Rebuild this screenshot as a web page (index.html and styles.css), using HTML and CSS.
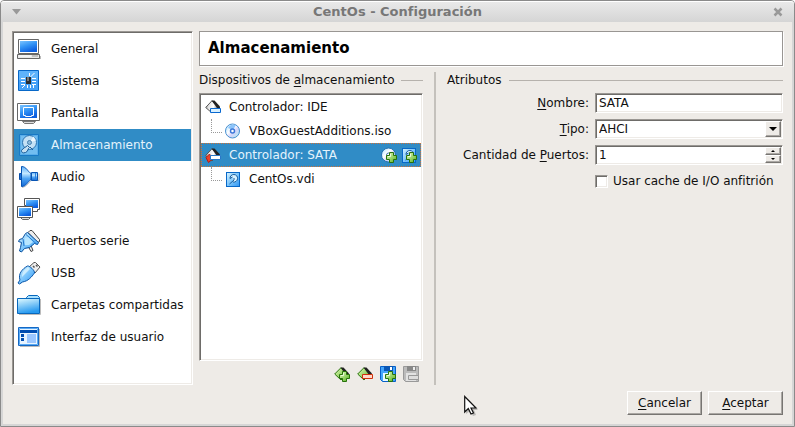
FILE: index.html
```html
<!DOCTYPE html>
<html lang="es">
<head>
<meta charset="utf-8">
<title>CentOs - Configuración</title>
<link rel="stylesheet" href="styles.css">
</head>
<body>
<svg class="defs" aria-hidden="true">
  <defs>
    <linearGradient id="blue" x1="0" y1="0" x2="0.5" y2="1"><stop offset="0" stop-color="#7cc4ff"/><stop offset="0.5" stop-color="#3394f5"/><stop offset="1" stop-color="#0c5fe0"/></linearGradient>
    <linearGradient id="sky" x1="0" y1="0" x2="1" y2="1"><stop offset="0" stop-color="#d8f4ff"/><stop offset="0.5" stop-color="#7cc6fc"/><stop offset="1" stop-color="#2d94f2"/></linearGradient>
    <linearGradient id="cone" x1="0" y1="0" x2="0" y2="1"><stop offset="0" stop-color="#5cb0fa"/><stop offset="0.35" stop-color="#c4e8ff"/><stop offset="0.6" stop-color="#4fa5f4"/><stop offset="1" stop-color="#1468d4"/></linearGradient>
    <linearGradient id="folder" x1="0" y1="0" x2="0.3" y2="1"><stop offset="0" stop-color="#e2fbff"/><stop offset="1" stop-color="#279af0"/></linearGradient>
    <linearGradient id="green" x1="0" y1="0" x2="1" y2="1"><stop offset="0" stop-color="#eaffc0"/><stop offset="1" stop-color="#4fae1c"/></linearGradient>
    <linearGradient id="disc" x1="0" y1="0" x2="1" y2="1"><stop offset="0" stop-color="#a4dcff"/><stop offset="0.4" stop-color="#ffffff"/><stop offset="0.6" stop-color="#d4d4fa"/><stop offset="1" stop-color="#a8f0ee"/></linearGradient>
    <linearGradient id="metal" x1="0" y1="0" x2="1" y2="0.2"><stop offset="0" stop-color="#777"/><stop offset="0.3" stop-color="#e0e0e0"/><stop offset="0.7" stop-color="#fff"/><stop offset="1" stop-color="#999"/></linearGradient>
    <g id="plus">
      <path d="M8.500 5.500h4v3h3v4h-3v3h-4v-3h-3v-4h3z" fill="url(#green)" stroke="#28720c"/>
      <path d="M9.500 7v2.500H7" fill="none" stroke="#fff" opacity=".7"/>
    </g>
    <g id="card">
      <path d="M.7 8.500 7 1.700l6 6.300-6 6z" fill="url(#metal)" stroke="#555"/>
      <path d="M6.500 1.500h3l5.500 6v2L12 9z" fill="#222"/>
    </g>
    <g id="greencard">
      <path d="M.7 8 7 1.700l6 6.300-6 6z" fill="url(#green)" stroke="#28720c"/>
      <path d="M6.500 1.500h3l5.500 6v2L12 9z" fill="#222"/>
    </g>
    <g id="drive">
      <rect x="1.500" y="1.500" width="13" height="14" fill="url(#sky)" stroke="#0868c8"/>
      <path d="M8 11a3.800 3.800 0 1 0-3-3.500l2.500-1.500" fill="#d9f2ff" stroke="#145a9c"/>
      <path d="m4.500 13 4.500-4V7" fill="none" stroke="#145a9c"/>
    </g>
  </defs>
</svg>
<div class="window">
  <header class="titlebar">
    <button class="title-button" aria-label="Menú de la ventana"><svg width="10" height="6" viewBox="0 0 10 6"><path d="M0 0h9L4.500 5.500z" fill="#999"/></svg></button>
    <h1 class="title">CentOs - Configuración</h1>
    <button class="title-button" aria-label="Cerrar"><svg width="10" height="10" viewBox="0 0 10 10"><path d="m1.500 1.500 7 7m0-7-7 7" stroke="#999" stroke-width="2.500"/></svg></button>
  </header>
  <div class="content">
    <nav class="sidebar sunken">
      <a class="category" href="#general"><svg class="icon" viewBox="0 0 24 24"><path d="M3 19h21v3H2" fill="#bbb"/><path d="M1.500 2.500h20v14h-20z" fill="#fff" stroke="#666"/><path d="M3 4h17v11H3z" fill="url(#blue)"/><path d="M.5 17.500h22v4H.5z" fill="#e8e8e8" stroke="#666"/><path d="M2 19h12" stroke="#fff"/><path d="M15 19h6" stroke="#999"/></svg>General</a>
      <a class="category" href="#sistema"><svg class="icon" viewBox="0 0 24 24"><path d="M1.500 1.500h20v20h-20z" fill="#5fb4fb" stroke="#0868c8"/><path d="M2 11h19v10H2z" fill="#3293f5" opacity=".6"/><path d="M4 9.500h4m-4 3h4m-4 3h4m7-6h4m-4 3h4m-4 3h4M12.500 4v3m5-3-4 4M10.500 16v3m3-3v3m3-3v3M5 19l3-3" fill="none" stroke="#fff"/><path d="M9 8h5v7H9z" fill="#2a2d31"/><path d="M10 8h2v4h-2z" fill="#777"/></svg>Sistema</a>
      <a class="category" href="#pantalla"><svg class="icon" viewBox="0 0 24 24"><path d="M5.500 20.500h13l-2 2h-9z" fill="#ddd" stroke="#777"/><path d="M.5 2.500h22v17H.5z" fill="#fff" stroke="#666"/><path d="M3 4h17v13H3z" fill="url(#blue)"/><path d="M6.500 6.500h10v8h-2v1h-6v-1h-2z" fill="none" stroke="#fff"/></svg>Pantalla</a>
      <a class="category selected" href="#almacenamiento" aria-current="page"><svg class="icon" viewBox="0 0 24 24"><path d="M2.500 1.500h19v21h-19z" fill="#5aaeea" stroke="#1879c4"/><path d="M4 3h16v18H4z" fill="#72bdf0"/><circle cx="12.500" cy="9.500" r="7" fill="#c4e1f5" stroke="#2a73b0"/><path d="m12.500 9.500 4-6 2.500 4z" fill="#eef8ff"/><circle cx="12.500" cy="9.500" r="2" fill="#8cbadb" stroke="#4480ae"/><path d="M4.500 17.500c2-3 4-3 6-5l2 2c-2 1-1 4-4 5s-4 0-4-2z" fill="#c5dff1" stroke="#155a98"/><path d="m13 14 3 3" stroke="#1b5f9c"/></svg>Almacenamiento</a>
      <a class="category" href="#audio"><svg class="icon" viewBox="0 0 24 24"><path d="M5 22.500c5-1 7-5 9-7h8v-7" fill="none" stroke="#bbb"/><path d="M4.500 8.500h-2v6h2z" fill="#1c72dc" stroke="#074fab"/><path d="M4.500 1.500c5 0 6 5 9.500 7v6c-3.500 2-4.500 7-9.500 7z" fill="url(#cone)" stroke="#0754b4"/><path d="M14.500 7.500h6v8h-6z" fill="url(#cone)" stroke="#0754b4"/><path d="M18.500 8v7" stroke="#2a80e0"/></svg>Audio</a>
      <a class="category" href="#red"><svg class="icon" viewBox="0 0 24 24"><path d="M7.500 1.500h15v11h-2v2h-8v-6h-5z" fill="#fff" stroke="#555"/><path d="M9 3h12v8H9z" fill="url(#blue)"/><path d="M3.500 20.500h10l-2 2h-6z" fill="#ddd" stroke="#666"/><path d="M.5 9.500h15v11H.5z" fill="#fff" stroke="#555"/><path d="M2 11h12v8H2z" fill="url(#blue)"/></svg>Red</a>
      <a class="category" href="#serie"><svg class="icon" viewBox="0 0 24 24"><path d="m11 3.500 2-2h2l7.500 9v2l-2 1z" fill="#eee" stroke="#444"/><path d="m11 17 3 5.500 2-1-2-5z" fill="#eee" stroke="#444"/><path d="m1.500 12.500 1-2 3-1 3-5 2-1 11 10-1 2-3-1-5 4-5 1-3 3.500-2-1 1-3.500 1-5z" fill="url(#sky)" stroke="#074f9e"/><path d="m9 5.500 10 9M6 10l1 7" stroke="#2378cc"/><path d="m8 9 3-1 5 5-4 3H8z" fill="#b8e6ff"/></svg>Puertos serie</a>
      <a class="category" href="#usb"><svg class="icon" viewBox="0 0 24 24"><path d="m12 6 5-4.500h1.500L23 6l-5 6z" fill="#eee" stroke="#555"/><path d="m16 5 1.500 1.500M19 4l1.500 1.500" stroke="#555" stroke-width="1.500"/><path d="M3 19C1 13 5 8 10.500 5c2-.5 7.500 4.500 7 7-3 4-6 8-12 9l-3 2-1.500-1z" fill="url(#sky)" stroke="#0754a8"/><path d="M5 16c0-5 2-7 6-10l2 2z" fill="#e4faff" opacity=".7"/></svg>USB</a>
      <a class="category" href="#carpetas"><svg class="icon" viewBox="0 0 24 24"><path d="M9.500 5.500v-1l2-2h9l2 2v4h-13" fill="#a8e1ff" stroke="#0868bd"/><path d="M.5 5.500h22v15H.5z" fill="url(#folder)" stroke="#0868bd"/><path d="M23.500 6v15.500H2" fill="none" stroke="#bbb"/></svg>Carpetas compartidas</a>
      <a class="category" href="#interfaz"><svg class="icon" viewBox="0 0 24 24"><path d="M22.500 4v17.500H3" fill="none" stroke="#bbb"/><path d="M1.500 2.500h20v18h-20z" fill="#e8f4ff" stroke="#1468c4"/><path d="M2.500 3.500h18v16h-18z" fill="none" stroke="#5aaaf4"/><path d="M3 5h17v3H3zm1 4h3v3H4zm0 4h3v3H4z" fill="#004cb0"/><path d="M10 9h9v9h-9z" fill="#9ac6ff"/></svg>Interfaz de usuario</a>
    </nav>
    <main class="page">
      <h2 class="page-title">Almacenamiento</h2>
      <div class="panels">
        <section class="storage">
          <h3 class="group-title"><span>Dispositivos de <u>a</u>lmacenamiento</span></h3>
          <div class="tree sunken">
            <div class="node"><svg class="small-icon" viewBox="0 0 16 16"><use href="#card"/><path d="M5.500 9.500h10v4h-10z" fill="#d8f0ff" stroke="#0868d0"/></svg><span>Controlador: IDE</span></div>
            <div class="node child"><svg class="small-icon" viewBox="0 0 16 16"><circle cx="7.500" cy="8" r="7" fill="url(#disc)" stroke="#4a90d0"/><path d="M3 5c2-4 6-4 8-3L8 7z" fill="#8cc4fa"/><circle cx="7.500" cy="8" r="2" fill="#fff" stroke="#3c78d8" stroke-width="1.500"/></svg><span>VBoxGuestAdditions.iso</span></div>
            <div class="node selected"><svg class="small-icon" viewBox="0 0 16 16"><use href="#card"/><path d="M1 10.500 4.500 7l3 5-4 3.500z" fill="#ee4028" stroke="#b61c10"/><path d="M5.500 8.500h10v4h-10z" fill="#fff" stroke="#2878c8"/></svg><span>Controlador: SATA</span>
              <button class="tool first" aria-label="Agregar dispositivo CD/DVD"><svg class="small-icon" viewBox="0 0 16 16"><circle cx="7.500" cy="8" r="7" fill="url(#disc)" stroke="#2470b0"/><circle cx="7.500" cy="8" r="2" fill="#fff" stroke="#4078b0"/><use href="#plus"/></svg></button>
              <button class="tool" aria-label="Agregar disco duro"><svg class="small-icon" viewBox="0 0 16 16"><use href="#drive"/><use href="#plus"/></svg></button>
            </div>
            <div class="node child"><svg class="small-icon" viewBox="0 0 16 16"><use href="#drive"/></svg><span>CentOs.vdi</span></div>
          </div>
          <div class="toolbar">
            <button class="tool" aria-label="Agregar controlador"><svg class="small-icon" viewBox="0 0 16 16"><use href="#greencard"/><use href="#plus"/></svg></button>
            <button class="tool" aria-label="Quitar controlador"><svg class="small-icon" viewBox="0 0 16 16"><use href="#greencard"/><path d="M5.500 8.500h10v4h-10z" fill="#ffd8c8" stroke="#d0300c"/></svg></button>
            <button class="tool" aria-label="Agregar conexión"><svg class="small-icon" viewBox="0 0 16 16"><path d="M.5.500h15v15h-13l-2-2z" fill="#45a5fb" stroke="#0860c8"/><path d="M4 0h9v5H4z" fill="#0b57b5"/><path d="M10 1h2v3h-2z" fill="#fff"/><path d="M3 7h10v8H3z" fill="#e9faff"/><use href="#plus"/></svg></button>
            <button class="tool" aria-label="Quitar conexión" disabled><svg class="small-icon" viewBox="0 0 16 16"><path d="M.5.500h15v15h-13l-2-2z" fill="#bbb" stroke="#999"/><path d="M4 0h9v5H4z" fill="#888"/><path d="M10 1h2v3h-2z" fill="#eee"/><path d="M3 7h10v8H3z" fill="#e2e2e2"/><path d="M5.500 9.500h10v4h-10z" fill="#ddd" stroke="#999"/></svg></button>
          </div>
        </section>
        <section class="attributes">
          <h3 class="group-title"><span>Atributos</span></h3>
          <form class="form">
            <label for="name"><u>N</u>ombre:</label>
            <input class="field sunken" id="name" type="text" value="SATA">
            <label for="type"><u>T</u>ipo:</label>
            <div class="control sunken">
              <select class="field" id="type"><option>AHCI</option></select>
              <span class="arrow raised"><svg width="8" height="4" viewBox="0 0 8 4"><path d="M0 0h8L4 4z"/></svg></span>
            </div>
            <label for="ports">Cantidad de <u>P</u>uertos:</label>
            <div class="control sunken">
              <input class="field" id="ports" type="number" value="1">
              <div class="spin">
                <button class="raised" type="button" aria-label="Aumentar"><svg width="4" height="2" viewBox="0 0 4 2"><path d="M0 2h4L2 0z"/></svg></button>
                <button class="raised" type="button" aria-label="Disminuir"><svg width="4" height="2" viewBox="0 0 4 2"><path d="M0 0h4L2 2z"/></svg></button>
              </div>
            </div>
            <label class="check"><input class="sunken" type="checkbox">Usar cache de I/O anfitrión</label>
          </form>
        </section>
      </div>
    </main>
  </div>
  <footer class="actions">
    <button class="push raised"><span><u>C</u>ancelar</span></button>
    <button class="push raised"><span><u>A</u>ceptar</span></button>
  </footer>
</div>
<svg class="pointer" viewBox="0 0 14 21" aria-hidden="true"><path d="M2 3v16l4-3 3 5 3-1-2-5h4z" fill="#888" opacity=".5"/><path d="M.7 1.500v15.500l3.600-3.500 2.700 5.500 2.500-1-2.500-5h5z" fill="#fff" stroke="#111" stroke-width="1.200"/></svg>
</body>
</html>
```
FILE: styles.css
```css
* {
  box-sizing: border-box;
}

body {
  margin: 0;
  background: #fff;
  color: #101010;
  font: 12px/16px "DejaVu Sans", sans-serif;
}

button,
input,
select {
  margin: 0;
  padding: 0;
  border: 0;
  border-radius: 0;
  background: none;
  color: inherit;
  font: inherit;
}

h1,
h2,
h3 {
  margin: 0;
  font-size: inherit;
}

u {
  text-underline-offset: 2px;
  text-decoration-thickness: 1px;
}

svg {
  display: block;
}

.defs {
  position: absolute;
  width: 0;
  height: 0;
}

.window {
  display: flex;
  flex-direction: column;
  min-height: 100vh;
  border: 1px solid #8a8a8a;
  border-radius: 4px 4px 0 0;
  background: #eeebe7;
  box-shadow: inset 0 0 0 2px #d6d6d6;
}

.titlebar {
  display: flex;
  align-items: center;
  height: 21px;
  padding: 0 10px;
  border-top: 1px solid #fff;
  border-radius: 3px 3px 0 0;
  background: linear-gradient(#e9e9e9, #d5d5d5);
}

.title-button {
  display: grid;
  place-items: center;
  width: 12px;
  height: 16px;
}

.title {
  flex: 1;
  color: #777;
  font-size: 13px;
  text-align: center;
}

.content {
  display: flex;
  flex: 1;
  gap: 6px;
  padding: 9px 11px 6px;
}

.sunken {
  border: 1px solid;
  border-color: #9a9793 #fff #fff #9a9793;
  background: #fff;
  box-shadow: inset 1px 1px #6e6c69, inset -1px -1px #eeebe7;
}

.raised {
  border: 1px solid;
  border-color: #fff #777572 #777572 #fff;
  background: #eeebe7;
  box-shadow: inset -1px -1px #aaa7a3;
}

.sidebar {
  width: 181px;
  padding: 1px;
}

.category {
  display: flex;
  align-items: center;
  gap: 10px;
  height: 32px;
  padding-left: 3px;
  color: inherit;
  text-decoration: none;
  white-space: nowrap;
}

.icon {
  flex: none;
  width: 24px;
  height: 24px;
}

.selected {
  background: #308cc6;
  color: #e4f3fc;
}

.page {
  display: flex;
  flex: 1;
  flex-direction: column;
  gap: 6px;
}

.page-title {
  height: 35px;
  padding-left: 8px;
  border: 1px solid #999693;
  background: #fff;
  box-shadow: 1px 1px #fff;
  color: #000;
  font-size: 15px;
  line-height: 33px;
}

.panels {
  display: flex;
  flex: 1;
}

.storage {
  display: flex;
  flex-direction: column;
  width: 224px;
}

.group-title {
  display: flex;
  align-items: center;
  gap: 7px;
  height: 16px;
  font-weight: normal;
  white-space: nowrap;
}

.group-title::after {
  flex: 1;
  height: 1px;
  background: #b6b2ad;
  content: "";
}

.tree {
  flex: 1;
  margin-top: 5px;
  padding: 1px;
}

.node {
  position: relative;
  display: flex;
  align-items: center;
  gap: 8px;
  height: 24px;
  padding: 0 4px;
}

.node.selected {
  background:
    repeating-linear-gradient(90deg, #cf7339 0 1px, transparent 1px 2px) top / 100% 1px no-repeat,
    repeating-linear-gradient(90deg, #cf7339 0 1px, transparent 1px 2px) bottom / 100% 1px no-repeat,
    repeating-linear-gradient(#cf7339 0 1px, transparent 1px 2px) left / 1px 100% no-repeat,
    repeating-linear-gradient(#cf7339 0 1px, transparent 1px 2px) right / 1px 100% no-repeat,
    #308cc6;
}

.child {
  padding-left: 24px;
}

.child::before {
  position: absolute;
  top: 0;
  left: 10px;
  width: 10px;
  height: 13px;
  border: dotted #999;
  border-width: 0 0 1px 1px;
  content: "";
}

.small-icon {
  flex: none;
  width: 16px;
  height: 16px;
}

.first {
  margin-left: auto;
}

.node .tool + .tool {
  margin-left: -4px;
}

.toolbar {
  display: flex;
  justify-content: flex-end;
  gap: 7px;
  height: 24px;
  padding: 5px 4px 3px;
}

.attributes {
  flex: 1;
  margin-left: 11px;
  padding-left: 11px;
  border-left: 2px solid #c4c1bc;
}

.form {
  display: grid;
  grid-template-columns: 142px 1fr;
  gap: 6px;
  align-items: center;
  margin-top: 5px;
  text-align: right;
}

.field {
  width: 100%;
  height: 20px;
  padding: 0 3px;
  outline: 0;
  appearance: none;
}

.control {
  display: flex;
  height: 20px;
  padding: 1px;
}

.control .field {
  flex: 1;
  min-width: 0;
  height: 16px;
  padding: 0 2px;
  appearance: textfield;
}

.control select.field {
  appearance: none;
}

.field::-webkit-inner-spin-button {
  display: none;
}

.arrow {
  display: grid;
  place-items: center;
  width: 16px;
  height: 16px;
}

.spin {
  display: grid;
  grid-template-rows: 8px 8px;
  width: 16px;
}

.spin button {
  display: grid;
  place-items: center;
}

.check {
  display: flex;
  grid-column: 2;
  align-items: center;
  gap: 5px;
  height: 20px;
}

.check input {
  width: 13px;
  height: 13px;
  appearance: none;
}

.actions {
  display: flex;
  justify-content: flex-end;
  gap: 6px;
  padding: 0 11px 11px;
}

.push {
  width: 75px;
  height: 24px;
}

.pointer {
  position: absolute;
  top: 395px;
  left: 464px;
  width: 14px;
  height: 21px;
}
```
